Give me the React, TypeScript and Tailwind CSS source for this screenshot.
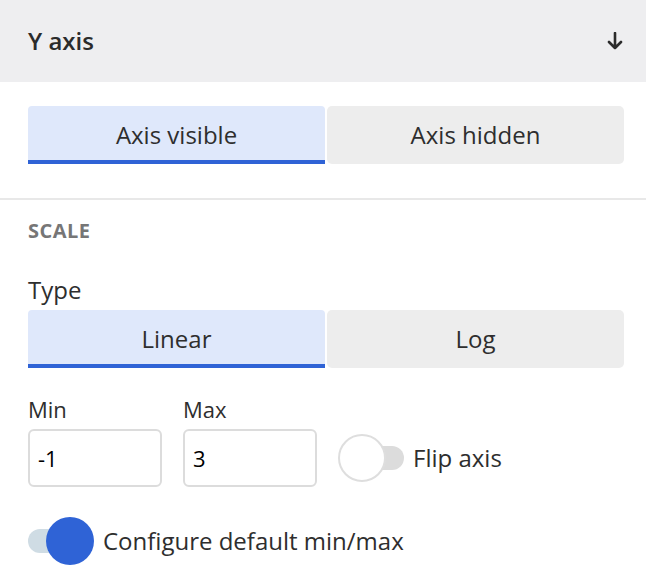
import React from 'react';

const font = { fontFamily: '"Open Sans", "Noto Sans", sans-serif' };

interface SegmentProps {
  options: string[];
  active: number;
}

const Segment: React.FC<SegmentProps> = ({ options, active }) => (
  <div className="flex gap-[2px] h-[58px]">
    {options.map((opt, i) => (
      <div
        key={opt}
        className={`flex-1 flex items-center justify-center text-[24px] text-[#2e2e2e] ${
          i === active
            ? 'bg-[#dfe8fb] border-b-4 border-[#2f63d6] rounded-t-[4px] pt-[4px]'
            : 'bg-[#ededed] rounded-[5px]'
        }`}
      >
        {opt}
      </div>
    ))}
  </div>
);

interface ToggleProps {
  on: boolean;
}

// track 56x24 with a 48px knob hanging 10px over the end
const Toggle: React.FC<ToggleProps> = ({ on }) => (
  <div className="relative w-[66px] h-[48px] shrink-0">
    <div
      className={`absolute top-[12px] h-[24px] w-[56px] rounded-full ${
        on ? 'left-0 bg-[#cfdce4]' : 'left-[10px] bg-[#dcdcdc]'
      }`}
    />
    <div
      className={`absolute top-0 h-[48px] w-[48px] rounded-full ${
        on ? 'left-[18px] bg-[#2f63d6]' : 'left-0 bg-white border-2 border-[#dedede]'
      }`}
    />
  </div>
);

export default function App() {
  return (
    <div className="w-[646px] h-[578px] bg-white overflow-hidden" style={font}>
      {/* header */}
      <div className="h-[82px] bg-[#eeeef0] flex items-center justify-between pl-[28px] pr-[22px]">
        <span className="text-[24px] font-semibold text-[#2b2b2b]">Y axis</span>
        <svg width="16" height="18" viewBox="0 0 16 18" className="mr-[1px]">
          <path d="M8 1 V16 M2 10 L8 16 L14 10" fill="none" stroke="#2b2b2b" strokeWidth="2.6" strokeLinecap="round" strokeLinejoin="round" />
        </svg>
      </div>

      <div className="px-[22px] pl-[28px] pt-[24px] pb-[34px] border-b-2 border-[#e8e8e8]">
        <Segment options={['Axis visible', 'Axis hidden']} active={0} />
      </div>

      <div className="pl-[28px] pr-[22px]">
        <div className="pt-[18px] text-[20px] font-bold text-[#767676] tracking-[0.5px] leading-[26px]">SCALE</div>
        <div className="mt-[30px] text-[24px] text-[#2e2e2e] leading-[32px]">Type</div>
        <div className="mt-[4px]">
          <Segment options={['Linear', 'Log']} active={0} />
        </div>

        <div className="flex items-end gap-[21px] mt-[26px]">
          <div className="flex flex-col">
            <label className="text-[22px] text-[#2e2e2e] leading-[30px] mb-[5px]">Min</label>
            <div className="w-[134px] h-[58px] border-2 border-[#dcdcdc] rounded-[6px] flex items-center px-[8px] text-[22px] text-black">-1</div>
          </div>
          <div className="flex flex-col">
            <label className="text-[22px] text-[#2e2e2e] leading-[30px] mb-[5px]">Max</label>
            <div className="w-[134px] h-[58px] border-2 border-[#dcdcdc] rounded-[6px] flex items-center px-[8px] text-[22px] text-black">3</div>
          </div>
          <div className="h-[58px] flex items-center gap-[9px]">
            <Toggle on={false} />
            <span className="text-[24px] text-[#2e2e2e]">Flip axis</span>
          </div>
        </div>

        <div className="flex items-center gap-[9px] mt-[30px]">
          <Toggle on={true} />
          <span className="text-[24px] text-[#2e2e2e]">Configure default min/max</span>
        </div>
      </div>
    </div>
  );
}
